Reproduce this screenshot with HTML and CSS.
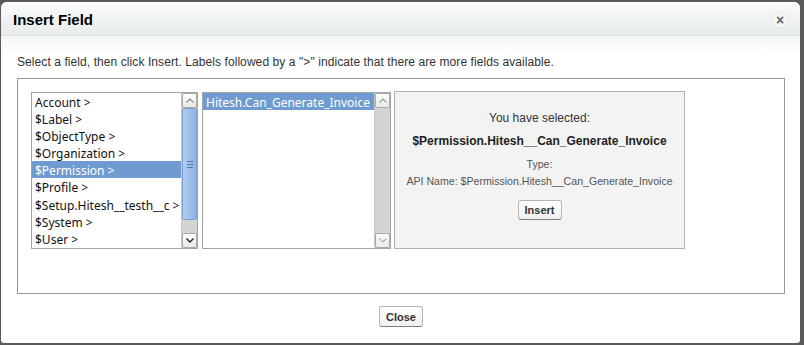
FILE: index.html
```html
<!DOCTYPE html>
<html lang="en">
<head>
  <meta charset="UTF-8">
  <title>Insert Field</title>
  <link rel="stylesheet" href="styles.css">
</head>
<body>
  <!-- Dialog -->
  <div class="dialog">
    <div class="dialog-header">
      <h2>Insert Field</h2>
      <span class="dialog-x">&times;</span>
    </div>

    <div class="dialog-body">
      <p class="hint">Select a field, then click Insert. Labels followed by a "&gt;" indicate that there are more fields available.</p>

      <div class="field-box">
        <!-- first level -->
        <div class="listbox list-objects">
          <ul class="options">
            <li>Account &gt;</li>
            <li>$Label &gt;</li>
            <li>$ObjectType &gt;</li>
            <li>$Organization &gt;</li>
            <li class="selected">$Permission &gt;</li>
            <li>$Profile &gt;</li>
            <li>$Setup.Hitesh__testh__c &gt;</li>
            <li>$System &gt;</li>
            <li>$User &gt;</li>
          </ul>
          <div class="scrollbar">
            <span class="sb-btn">
              <svg width="8" height="5" viewBox="0 0 8 5"><polyline points="0.5,4.5 4,1 7.5,4.5" fill="none" stroke="#8a8a8a" stroke-width="1.2"/></svg>
            </span>
            <div class="sb-track">
              <div class="sb-thumb"><span class="grip"></span></div>
            </div>
            <span class="sb-btn">
              <svg width="8" height="5" viewBox="0 0 8 5"><polyline points="0.5,0.5 4,4 7.5,0.5" fill="none" stroke="#222" stroke-width="1.4"/></svg>
            </span>
          </div>
        </div>

        <!-- second level -->
        <div class="listbox list-fields">
          <ul class="options">
            <li class="selected">Hitesh.Can_Generate_Invoice</li>
          </ul>
          <div class="scrollbar">
            <span class="sb-btn">
              <svg width="8" height="5" viewBox="0 0 8 5"><polyline points="0.5,4.5 4,1 7.5,4.5" fill="none" stroke="#9a9a9a" stroke-width="1.2"/></svg>
            </span>
            <div class="sb-track"></div>
            <span class="sb-btn">
              <svg width="8" height="5" viewBox="0 0 8 5"><polyline points="0.5,0.5 4,4 7.5,0.5" fill="none" stroke="#aaa" stroke-width="1.2"/></svg>
            </span>
          </div>
        </div>

        <!-- selection info -->
        <div class="selection">
          <p class="sel-title">You have selected:</p>
          <p class="sel-name">$Permission.Hitesh__Can_Generate_Invoice</p>
          <p class="sel-meta">Type:</p>
          <p class="sel-meta">API Name: $Permission.Hitesh__Can_Generate_Invoice</p>
          <button class="btn btn-insert">Insert</button>
        </div>
      </div>

      <div class="dialog-footer">
        <button class="btn btn-close">Close</button>
      </div>
    </div>
  </div>
</body>
</html>
```

FILE: styles.css
```css
/* Global Styles */
* {
  margin: 0;
  padding: 0;
  box-sizing: border-box;
}

body {
  background-color: #5b5b5b;
  font-family: "Liberation Sans", Arial, sans-serif;
  color: #333;
  overflow: hidden;
}

/* Dialog */
.dialog {
  width: 799px;
  height: 341px;
  margin: 2px 0 0 1px;
  background-color: #fff;
  border-radius: 6px 6px 3px 3px;
  overflow: hidden;
}

.dialog-header {
  height: 34px;
  padding: 0 12px 0 12px;
  display: flex;
  align-items: center;
  justify-content: space-between;
  background: linear-gradient(#fbfcfc, #e7ebec);
  border-bottom: 1px solid #dde1e3;
}

.dialog-header h2 {
  font-size: 15px;
  font-weight: bold;
  color: #000;
  padding-top: 1px;
}

.dialog-x {
  width: 16px;
  height: 16px;
  margin-top: 3px;
  border: 1px solid #e8eaeb;
  border-radius: 2px;
  background-color: #f4f6f6;
  color: #666;
  font-size: 14px;
  font-weight: bold;
  line-height: 14px;
  text-align: center;
}

.dialog-body {
  padding: 19px 15px 0 16px;
  background: linear-gradient(#f3f5f6 0, #fff 18px);
}

.hint {
  font-size: 12px;
  line-height: 14px;
  letter-spacing: 0.08px;
}

/* Field picker box */
.field-box {
  margin-top: 9px;
  height: 216px;
  border: 1px solid #979797;
  padding: 13px 12px 0 13px;
  display: flex;
  align-items: flex-start;
}

.listbox {
  height: 157px;
  border: 1px solid #a5a5a5;
  display: flex;
  background-color: #fff;
}

.list-objects {
  width: 167px;
  margin-right: 4px;
}

.list-fields {
  width: 189px;
}

.options {
  flex: 1;
  list-style: none;
  font-family: "Noto Sans", sans-serif;
  font-size: 12px;
  color: #111;
  white-space: nowrap;
  overflow: hidden;
}

.options li {
  padding: 1px 0 0 3px;
  height: 17.1px;
  line-height: 17px;
}

.options li.selected {
  background-color: #6f9bd1;
  color: #fff;
}

/* Fake scrollbar */
.scrollbar {
  width: 16px;
  display: flex;
  flex-direction: column;
  background-color: #d4d4d4;
  border-left: 1px solid #c8c8c8;
}

.sb-btn {
  height: 15px;
  border: 1px solid #a9a9a9;
  border-radius: 2px;
  background: linear-gradient(#fdfdfd, #e9e9e9);
  display: flex;
  align-items: center;
  justify-content: center;
}

.sb-track {
  flex: 1;
  padding-bottom: 13px;
}

.sb-thumb {
  height: 100%;
  border: 1px solid #7b9ed3;
  border-radius: 2px;
  background: linear-gradient(90deg, #b2cbee, #8fb3e4);
  display: flex;
  align-items: center;
  justify-content: center;
}

.grip {
  width: 6px;
  height: 7px;
  border-top: 1px solid #4f73ab;
  border-bottom: 1px solid #4f73ab;
}

.grip::after {
  content: "";
  display: block;
  height: 1px;
  margin-top: 2px;
  background-color: #4f73ab;
}

/* Selection panel */
.selection {
  width: 291px;
  height: 158px;
  margin: -1px 0 0 3px;
  border: 1px solid #b2b2b2;
  background-color: #f3f3f3;
  text-align: center;
  padding-top: 19px;
}

.sel-title {
  font-size: 12px;
  line-height: 15px;
  color: #333;
}

.sel-name {
  margin-top: 8px;
  font-size: 12px;
  font-weight: bold;
  line-height: 15px;
  color: #222;
}

.sel-meta {
  font-size: 10.6px;
  line-height: 17px;
  color: #555;
}

.sel-name + .sel-meta {
  margin-top: 7px;
}

/* Buttons */
.btn {
  font-family: "Liberation Sans", Arial, sans-serif;
  font-weight: bold;
  color: #333;
  border: 1px solid #b5b5b5;
  border-bottom-color: #7f7f7f;
  border-radius: 3px;
  background: linear-gradient(#fff, #f0f0f0);
  cursor: pointer;
}

.btn-insert {
  margin-top: 10px;
  width: 44px;
  height: 20px;
  font-size: 11px;
}

.dialog-footer {
  display: flex;
  justify-content: center;
  padding-top: 12px;
}

.btn-close {
  width: 44px;
  height: 21px;
  font-size: 11px;
}
```
